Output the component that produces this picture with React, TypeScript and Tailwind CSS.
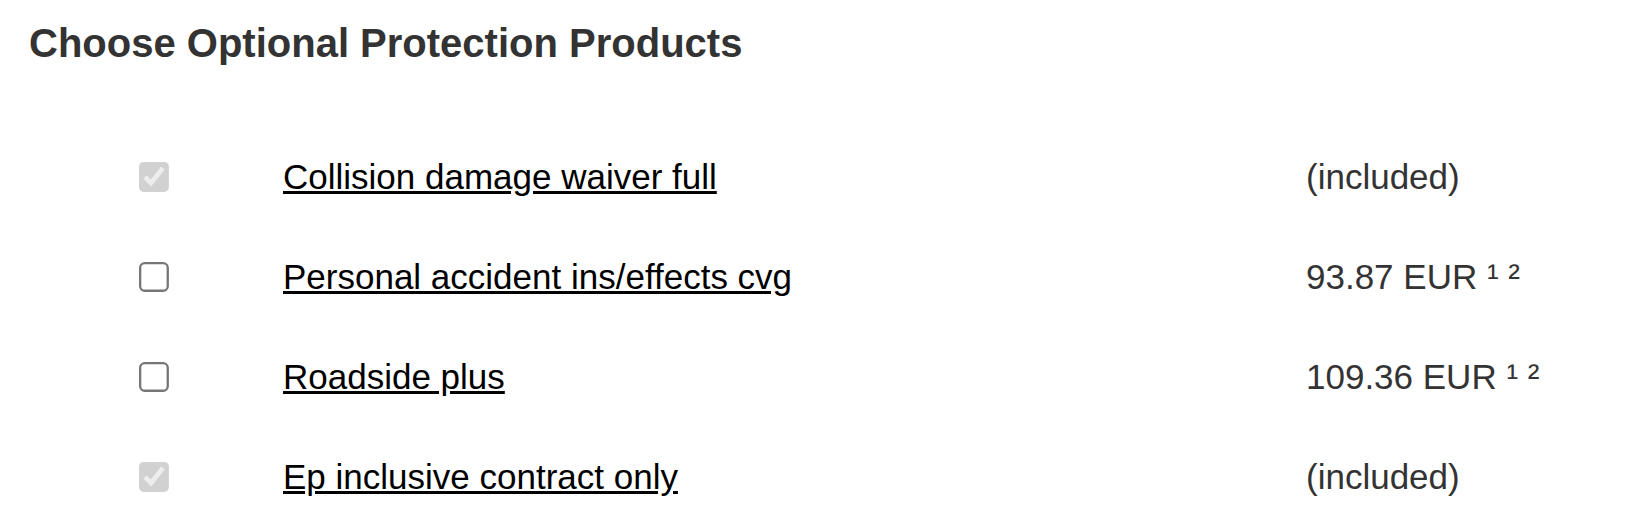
import React from 'react'

type Product = {
  id: string
  name: string
  price: string
  included: boolean
}

const products: Product[] = [
  { id: 'cdw', name: 'Collision damage waiver full', price: '(included)', included: true },
  { id: 'pai', name: 'Personal accident ins/effects cvg', price: '93.87 EUR ¹ ²', included: false },
  { id: 'rsp', name: 'Roadside plus', price: '109.36 EUR ¹ ²', included: false },
  { id: 'epi', name: 'Ep inclusive contract only', price: '(included)', included: true },
]

export default function App() {
  return (
    <div className="min-h-screen bg-white font-['Liberation_Sans',Arial,sans-serif]">
      <div className="pl-[29px] pt-[21px]">
        <h2 className="text-[40px] leading-[45px] font-bold text-[#333333]">
          Choose Optional Protection Products
        </h2>
      </div>

      <ul className="mt-[61px]">
        {products.map((p) => (
          <li
            key={p.id}
            className="grid grid-cols-[139px_144px_1023px_1fr] items-center h-[100px]"
          >
            <span />
            <span className="flex items-center">
              <input
                type="checkbox"
                defaultChecked={p.included}
                disabled={p.included}
                className="m-0 w-[13px] h-[13px] [zoom:2.3]"
              />
            </span>
            <a
              href="#"
              className="text-[35px] leading-[40px] text-black underline"
            >
              {p.name}
            </a>
            <span className="text-[35px] leading-[40px] text-[#333333]">
              {p.price}
            </span>
          </li>
        ))}
      </ul>
    </div>
  )
}
